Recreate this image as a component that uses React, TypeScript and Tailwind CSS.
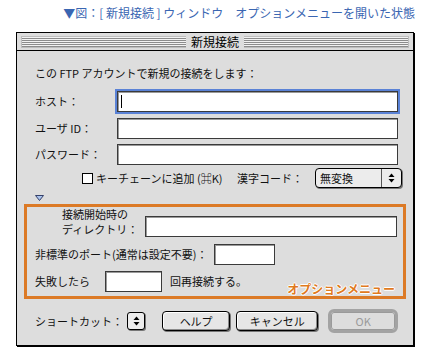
import type { ReactNode } from "react"

function Field({ className = "", focused = false }: { className?: string; focused?: boolean }) {
  return (
    <div
      className={`relative h-[21px] bg-white border border-[#3a3a3a] shadow-[inset_1px_1px_0_#9a9a9a] ${
        focused ? "outline-2 outline-[#5a82d6] outline-offset-0" : ""
      } ${className}`}
    >
      {focused && <div className="absolute left-[3px] top-[3px] h-[13px] w-px bg-black" />}
    </div>
  )
}

function Arrows() {
  return (
    <svg width="7" height="10" viewBox="0 0 7 10">
      <path d="M3.5 0.5 L6.5 4 L0.5 4 Z" fill="#000" />
      <path d="M3.5 9.5 L6.5 6 L0.5 6 Z" fill="#000" />
    </svg>
  )
}

function Button({ children, className = "" }: { children: ReactNode; className?: string }) {
  return (
    <div
      className={`flex h-[20px] items-center justify-center rounded-[4px] border border-black bg-[#e6e6e6] shadow-[inset_-1px_-1px_0_#8a8a8a,inset_1px_1px_0_#fff,1px_1px_0_#777] ${className}`}
    >
      {children}
    </div>
  )
}

export default function App() {
  return (
    <div className="h-[359px] w-[430px] overflow-hidden bg-white pt-[5px] font-['Noto_Sans_CJK_JP','Noto_Sans',sans-serif] text-[11px] text-[#111]">
      <p className="h-[16px] pr-[15px] text-right text-[12px] leading-[16px] text-[#3a66b2]">
        ▼図：[ 新規接続 ] ウィンドウ　オプションメニューを開いた状態
      </p>

      {/* Window */}
      <div className="ml-[16px] mt-[11px] w-[398px] border border-black bg-[#dddddd] shadow-[1px_1px_0_#000]">
        {/* Title bar */}
        <div className="relative flex h-[18px] items-center border-b border-black px-[4px]">
          <div className="h-[12px] w-full border border-[#bdbdbd] bg-[repeating-linear-gradient(to_bottom,#f2f2f2_0,#f2f2f2_1px,#8c8c8c_1px,#8c8c8c_2px)]" />
          <span className="absolute left-1/2 top-0 -translate-x-1/2 bg-[#dddddd] px-[5px] text-[12px] leading-[17px] text-black">
            新規接続
          </span>
        </div>

        <div className="pb-[12px] pl-[18px] pr-[15px]">
          <p className="mt-[15px] h-[14px] leading-[14px]">この FTP アカウントで新規の接続をします：</p>

          <div className="mt-[11px] flex items-center">
            <span className="w-[82px]">ホスト：</span>
            <Field className="flex-1" focused />
          </div>
          <div className="mt-[6px] flex items-center">
            <span className="w-[82px]">ユーザ ID：</span>
            <Field className="flex-1" />
          </div>
          <div className="mt-[5px] flex items-center">
            <span className="w-[82px]">パスワード：</span>
            <Field className="flex-1" />
          </div>

          <div className="mt-[3px] flex h-[20px] items-center">
            <div className="ml-[47px] h-[11px] w-[11px] border border-black bg-white" />
            <span className="ml-[3px] w-[141px] whitespace-nowrap">キーチェーンに追加 (⌘K)</span>
            <span className="w-[78px]">漢字コード：</span>
            <div className="-mr-[4px] flex h-[20px] w-[87px] items-center rounded-[4px] border border-black bg-[#ececec] shadow-[1px_1px_0_#777]">
              <span className="flex-1 pl-[4px]">無変換</span>
              <div className="flex h-full w-[20px] items-center justify-center border-l border-[#555]">
                <Arrows />
              </div>
            </div>
          </div>

          <svg className="mt-[7px] block" width="9" height="6" viewBox="0 0 9 6">
            <path d="M0.5 0.5 L8.5 0.5 L4.5 5.5 Z" fill="#a9c2ec" stroke="#34406a" strokeWidth="1" />
          </svg>

          {/* Options */}
          <div className="relative -ml-[11px] mt-[3px] w-[382px] border-[3px] border-[#dc7a26] pb-[4px] pl-[8px] pr-[6px]">
            <div className="flex h-[30px] items-end">
              <div className="ml-[27px] w-[83px] leading-[15px]">
                <div>接続開始時の</div>
                <div>ディレクトリ：</div>
              </div>
              <Field className="flex-1" />
            </div>
            <div className="mt-[7px] flex items-center">
              <span className="w-[179px] whitespace-nowrap">非標準のポート(通常は設定不要)：</span>
              <Field className="w-[61px]" />
            </div>
            <div className="mt-[6px] flex items-center">
              <span className="w-[70px]">失敗したら</span>
              <Field className="w-[57px]" />
              <span className="ml-[8px]">回再接続する。</span>
            </div>
            <span className="absolute bottom-0 right-[8px] text-[12px] font-bold leading-[14px] text-[#e07a1e] [text-shadow:1px_0_0_#fff,-1px_0_0_#fff,0_1px_0_#fff,0_-1px_0_#fff]">
              オプションメニュー
            </span>
          </div>

          {/* Bottom row */}
          <div className="mt-[10px] flex h-[24px] items-center">
            <span className="w-[93px] whitespace-nowrap">ショートカット：</span>
            <div className="flex h-[18px] w-[18px] items-center justify-center rounded-[3px] border border-black bg-[#ececec] shadow-[1px_1px_0_#777]">
              <Arrows />
            </div>
            <Button className="ml-[17px] w-[68px]">ヘルプ</Button>
            <Button className="ml-[6px] w-[83px]">キャンセル</Button>
            <div className="ml-[10px] flex h-[24px] w-[70px] items-center justify-center rounded-[6px] border-[3px] border-[#a3a3a3] bg-[#dddddd]">
              <div className="flex h-full w-full items-center justify-center rounded-[3px] border border-[#9a9a9a] text-[#9a9a9a]">
                OK
              </div>
            </div>
          </div>
        </div>
      </div>
    </div>
  )
}
